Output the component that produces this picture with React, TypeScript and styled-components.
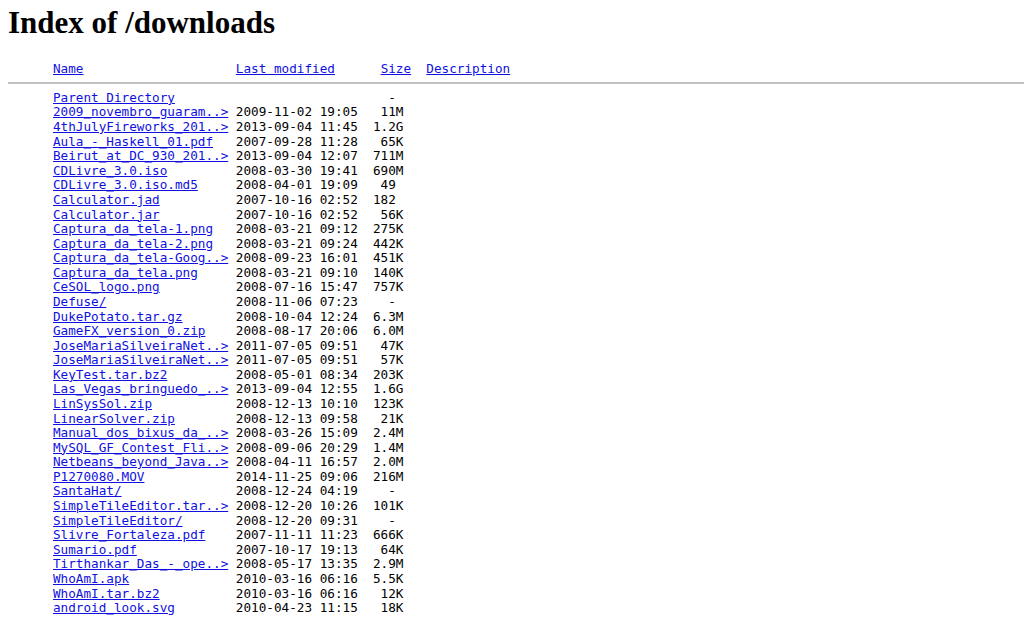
import React from "react";
import styled, { createGlobalStyle } from "styled-components";

const Global = createGlobalStyle`
  html, body {
    background: #ffffff;
  }
  body {
    margin: 0 0 0 8px;
    font-family: "Liberation Serif", "Times New Roman", serif;
    color: #000;
  }
`;

const Title = styled.h1`
  font-family: "Liberation Serif", "Times New Roman", serif;
  font-size: 31px;
  font-weight: bold;
  line-height: 36px;
  margin: 4.5px 0 21.5px 0;
`;

const Listing = styled.div`
  font-family: "DejaVu Sans Mono", "Liberation Mono", monospace;
  font-size: 12.66px;
  line-height: 14.58px;
  white-space: pre;
  color: #000;
`;

const HeaderRow = styled.div`
  display: grid;
  grid-template-columns: 24ch 19ch 6ch auto;
  padding-left: 45px;
`;

const Row = styled.div`
  display: grid;
  grid-template-columns: 24ch 16ch 6ch;
  padding-left: 45px;
`;

const Link = styled.a`
  color: #1010e0;
  text-decoration: underline;
  justify-self: start;
`;

const Cell = styled.span``;

const SizeCell = styled.span`
  text-align: right;
`;

const Rule = styled.hr`
  border: none;
  height: 2px;
  background: #c2c2c2;
  margin: 5.5px 0 6.8px 0;
`;

type Entry = [string, string, string];

const entries: Entry[] = [
  ["Parent Directory", "", "  - "],
  ["2009_novembro_guaram..>", "2009-11-02 19:05", " 11M"],
  ["4thJulyFireworks_201..>", "2013-09-04 11:45", "1.2G"],
  ["Aula_-_Haskell_01.pdf", "2007-09-28 11:28", " 65K"],
  ["Beirut_at_DC_930_201..>", "2013-09-04 12:07", "711M"],
  ["CDLivre_3.0.iso", "2008-03-30 19:41", "690M"],
  ["CDLivre_3.0.iso.md5", "2008-04-01 19:09", " 49 "],
  ["Calculator.jad", "2007-10-16 02:52", "182 "],
  ["Calculator.jar", "2007-10-16 02:52", " 56K"],
  ["Captura_da_tela-1.png", "2008-03-21 09:12", "275K"],
  ["Captura_da_tela-2.png", "2008-03-21 09:24", "442K"],
  ["Captura_da_tela-Goog..>", "2008-09-23 16:01", "451K"],
  ["Captura_da_tela.png", "2008-03-21 09:10", "140K"],
  ["CeSOL_logo.png", "2008-07-16 15:47", "757K"],
  ["Defuse/", "2008-11-06 07:23", "  - "],
  ["DukePotato.tar.gz", "2008-10-04 12:24", "6.3M"],
  ["GameFX_version_0.zip", "2008-08-17 20:06", "6.0M"],
  ["JoseMariaSilveiraNet..>", "2011-07-05 09:51", " 47K"],
  ["JoseMariaSilveiraNet..>", "2011-07-05 09:51", " 57K"],
  ["KeyTest.tar.bz2", "2008-05-01 08:34", "203K"],
  ["Las_Vegas_bringuedo_..>", "2013-09-04 12:55", "1.6G"],
  ["LinSysSol.zip", "2008-12-13 10:10", "123K"],
  ["LinearSolver.zip", "2008-12-13 09:58", " 21K"],
  ["Manual_dos_bixus_da_..>", "2008-03-26 15:09", "2.4M"],
  ["MySQL_GF_Contest_Fli..>", "2008-09-06 20:29", "1.4M"],
  ["Netbeans_beyond_Java..>", "2008-04-11 16:57", "2.0M"],
  ["P1270080.MOV", "2014-11-25 09:06", "216M"],
  ["SantaHat/", "2008-12-24 04:19", "  - "],
  ["SimpleTileEditor.tar..>", "2008-12-20 10:26", "101K"],
  ["SimpleTileEditor/", "2008-12-20 09:31", "  - "],
  ["Slivre_Fortaleza.pdf", "2007-11-11 11:23", "666K"],
  ["Sumario.pdf", "2007-10-17 19:13", " 64K"],
  ["Tirthankar_Das_-_ope..>", "2008-05-17 13:35", "2.9M"],
  ["WhoAmI.apk", "2010-03-16 06:16", "5.5K"],
  ["WhoAmI.tar.bz2", "2010-03-16 06:16", " 12K"],
  ["android_look.svg", "2010-04-23 11:15", " 18K"],
];

export default function App() {
  return (
    <>
      <Global />
      <Title>Index of /downloads</Title>
      <Listing>
        <HeaderRow>
          <Cell>
            <Link href="#">Name</Link>
          </Cell>
          <Cell>
            <Link href="#">Last modified</Link>
          </Cell>
          <Cell>
            <Link href="#">Size</Link>
          </Cell>
          <Cell>
            <Link href="#">Description</Link>
          </Cell>
        </HeaderRow>
        <Rule />
        {entries.map(([name, date, size], i) => (
          <Row key={i}>
            <Cell>
              <Link href="#">{name}</Link>
            </Cell>
            <Cell>{date}</Cell>
            <SizeCell>{size}</SizeCell>
          </Row>
        ))}
      </Listing>
    </>
  );
}
